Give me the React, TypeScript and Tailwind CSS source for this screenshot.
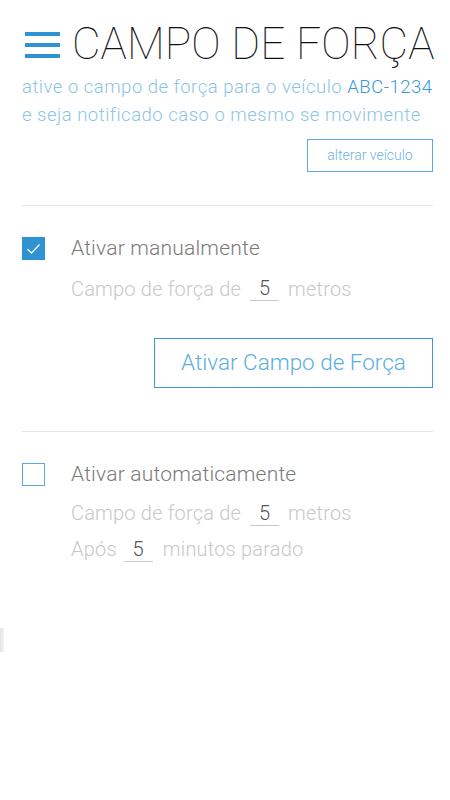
export default function App() {
  return (
    <div className="relative min-h-[800px] w-[450px] bg-white font-['Roboto','Liberation_Sans',sans-serif]">
      <div className="pl-[22px] pr-[17px] pt-[20px]">
        <div className="flex items-center gap-[15px]">
          <div className="flex w-[35px] flex-col gap-[7px] pl-[3px] pt-[2px]">
            <span className="h-[4px] w-[35px] bg-[#2f93d3]" />
            <span className="h-[4px] w-[35px] bg-[#2f93d3]" />
            <span className="h-[4px] w-[35px] bg-[#2f93d3]" />
          </div>
          <h1 className="text-[44px] leading-[48px] font-thin tracking-[0.1px] text-[#111] whitespace-nowrap">CAMPO DE FORÇA</h1>
        </div>
        <p className="mt-[5px] text-[18.5px] leading-[28px] font-light tracking-[0.5px] text-[#8cc4e6] whitespace-nowrap">
          ative o campo de força para o veículo <span className="text-[#3a98d6]">ABC-1234</span>
          <br />e seja notificado caso o mesmo se movimente
        </p>
        <div className="mt-[10px] flex justify-end">
          <button className="h-[33px] w-[126px] border border-[#5aa9db] text-[14px] font-light text-[#6fb3e0]">alterar veículo</button>
        </div>
        <div className="mt-[33px] h-px bg-[#e6e6e6]" />

        <div className="mt-[27px] flex items-center gap-[26px]">
          <span className="flex h-[23px] w-[23px] items-center justify-center bg-[#2f93d3]">
            <svg width="15" height="12" viewBox="0 0 15 12" fill="none">
              <path d="M1.5 6.2 L5.5 10 L13.5 1.5" stroke="white" strokeWidth="1.3" />
            </svg>
          </span>
          <span className="text-[21px] font-light tracking-[0.2px] text-[#7a7a7a]">Ativar manualmente</span>
        </div>
        <div className="mt-[9px] flex items-center pl-[49px] text-[20px] font-light tracking-[0.2px] text-[#c8c8c8]">
          <span>Campo de força de</span>
          <span className="mx-[9px] w-[29px] border-b border-[#c8c8c8] text-center leading-[24px] text-[#555]">5</span>
          <span>metros</span>
        </div>
        <div className="mt-[34px] flex justify-end">
          <button className="h-[50px] w-[279px] border border-[#3a98d6] text-[22.5px] font-light text-[#5aaee0]">Ativar Campo de Força</button>
        </div>
        <div className="mt-[43px] h-px bg-[#e6e6e6]" />

        <div className="mt-[27px] flex items-center gap-[26px]">
          <span className="h-[23px] w-[23px] border border-[#5aa9db]" />
          <span className="text-[21px] font-light tracking-[0.2px] text-[#7a7a7a]">Ativar automaticamente</span>
        </div>
        <div className="mt-[8px] flex items-center pl-[49px] text-[20px] font-light tracking-[0.2px] text-[#c8c8c8]">
          <span>Campo de força de</span>
          <span className="mx-[9px] w-[29px] border-b border-[#c8c8c8] text-center leading-[24px] text-[#555]">5</span>
          <span>metros</span>
        </div>
        <div className="mt-[6px] flex items-center pl-[49px] text-[20px] font-light tracking-[0.2px] text-[#c8c8c8]">
          <span>Após</span>
          <span className="mx-[7px] w-[29px] border-b border-[#c8c8c8] text-center leading-[24px] text-[#555]">5</span>
          <span className="ml-[3px]">minutos parado</span>
        </div>
      </div>
      <div className="absolute left-0 top-[628px] h-[24px] w-[4px] bg-gradient-to-r from-[#e4e4e4] to-[#f4f4f4]" />
    </div>
  );
}
